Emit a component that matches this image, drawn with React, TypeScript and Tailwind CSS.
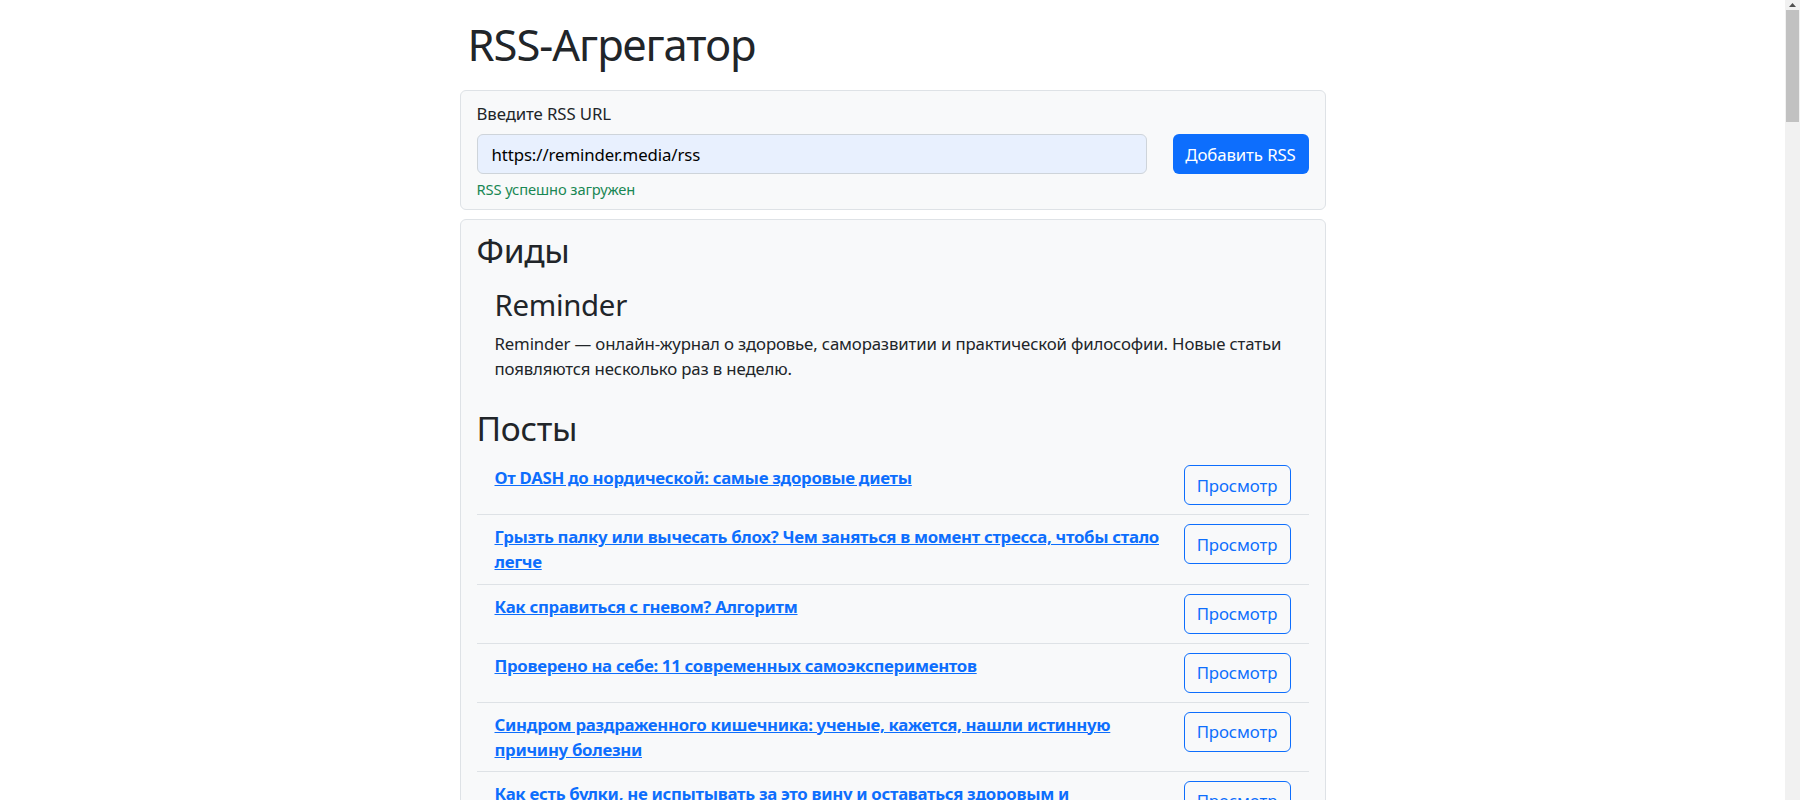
import React from "react";

const posts = [
  "От DASH до нордической: самые здоровые диеты",
  "Грызть палку или вычесать блох? Чем заняться в момент стресса, чтобы стало легче",
  "Как справиться с гневом? Алгоритм",
  "Проверено на себе: 11 современных самоэкспериментов",
  "Синдром раздраженного кишечника: ученые, кажется, нашли истинную причину болезни",
  "Как есть булки, не испытывать за это вину и оставаться здоровым и жизнерадостным",
  "Почему мы прокрастинируем и что с этим делать",
  "Что такое стоицизм и как он помогает справляться с трудностями",
];

export default function App() {
  return (
    <div className="flex h-[800px] w-full overflow-hidden bg-white font-['Noto_Sans',sans-serif] text-[#212529]">
      <div className="min-w-0 flex-1 overflow-hidden">
        <div className="mx-auto w-[866px] pt-[17px]">
          <h1 className="pl-[8px] text-[43.5px] font-normal leading-[54px] tracking-[-1px]">RSS-Агрегатор</h1>

          <div className="mt-[19px] rounded-[6px] border border-[#dee2e6] bg-[#f8f9fa] px-[16px] pb-[9px] pt-[9.5px]">
            <label className="block text-[16.8px] leading-[25.2px] tracking-[-0.1px]">Введите RSS URL</label>
            <div className="mt-[8.4px] flex items-center gap-[26px]">
              <input
                readOnly
                value="https://reminder.media/rss"
                className="h-[40px] min-w-0 flex-1 rounded-[6px] border border-[#ced4da] bg-[#e8f0fe] px-[14px] text-[16.8px] tracking-[-0.1px] text-black outline-none"
              />
              <button className="h-[40px] w-[136px] shrink-0 rounded-[6px] bg-[#0d6efd] text-[16.8px] tracking-[-0.1px] text-white">
                Добавить RSS
              </button>
            </div>
            <p className="mt-[3.5px] text-[14.7px] leading-[22px] tracking-[-0.1px] text-[#198754]">RSS успешно загружен</p>
          </div>

          <div className="mt-[9px] rounded-[6px] border border-[#dee2e6] bg-[#f8f9fa] px-[16px] pt-[10px]">
            <h2 className="text-[33.6px] font-normal leading-[40px] tracking-[-0.3px]">Фиды</h2>
            <div className="mt-[8px] px-[18px] pb-[10px] pt-[10px]">
              <h3 className="text-[29.4px] font-normal leading-[35.3px] tracking-[-0.3px]">Reminder</h3>
              <p className="mt-[8.4px] text-[16.8px] leading-[25.2px] tracking-[-0.15px]">
                Reminder — онлайн-журнал о здоровье, саморазвитии и практической философии. Новые статьи появляются несколько раз в неделю.
              </p>
            </div>
            <h2 className="mt-[16.5px] text-[33.6px] font-normal leading-[40px] tracking-[-0.3px]">Посты</h2>
            <ul className="mt-[8px]">
              {posts.map((p) => (
                <li
                  key={p}
                  className="flex items-start justify-between gap-[8px] border-b border-[#dee2e6] px-[18px] py-[9px]"
                >
                  <a href="#" className="text-[16.8px] font-bold leading-[25.2px] tracking-[-0.3px] text-[#0d6efd] underline">
                    {p}
                  </a>
                  <button className="h-[40px] w-[107px] shrink-0 rounded-[6px] border border-[#0d6efd] text-[16.8px] tracking-[-0.1px] text-[#0d6efd]">
                    Просмотр
                  </button>
                </li>
              ))}
            </ul>
          </div>
        </div>
      </div>

      <div className="flex h-full w-[15px] shrink-0 flex-col bg-[#f1f1f1]">
        <div className="flex h-[10px] items-center justify-center">
          <svg width="7" height="4" viewBox="0 0 7 4">
            <polygon points="3.5,0 7,4 0,4" fill="#505050" />
          </svg>
        </div>
        <div className="mx-[1px] h-[112px] bg-[#c1c1c1]" />
      </div>
    </div>
  );
}
